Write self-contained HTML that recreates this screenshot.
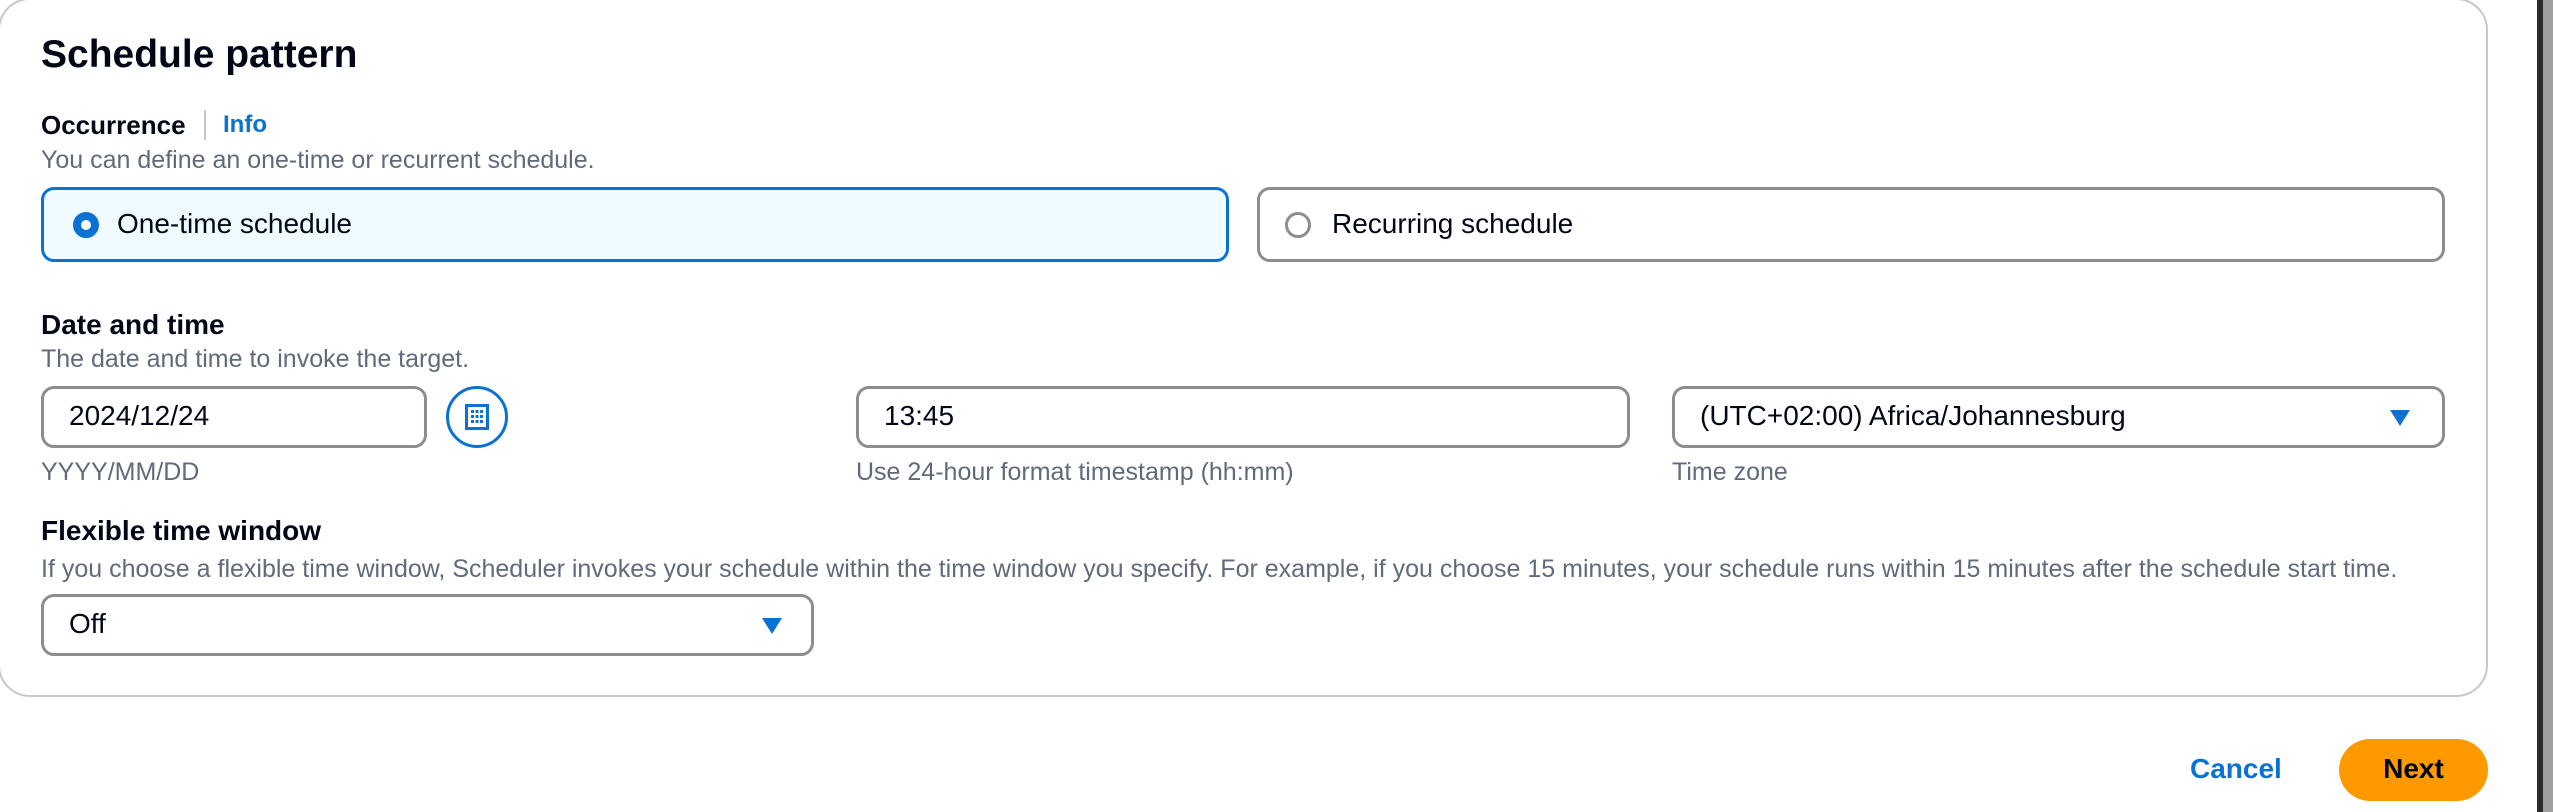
<!DOCTYPE html>
<html><head><meta charset="utf-8"><style>
*{box-sizing:border-box;margin:0;padding:0}
body{width:2553px;height:812px;background:#fff;position:relative;overflow:hidden;font-family:"Liberation Sans",Arial,sans-serif;color:#000716}
.a{position:absolute;white-space:nowrap}
.card{position:absolute;left:-2px;top:-2px;width:2490px;height:699px;border:2px solid #c6c6cd;border-radius:32px}
.h{font-weight:bold}
.d{color:#5f6b7a;font-size:25px}
.hp{color:#5f6b7a;font-size:25px}
.box{position:absolute;border:3px solid #8c8c94;border-radius:13px;background:#fff}
.txt{font-size:28px}
.arr{position:absolute;width:0;height:0;border-left:10px solid transparent;border-right:10px solid transparent;border-top:16px solid #0972d3}
</style></head><body>
<div class="card"></div>
<div class="a h" style="left:41px;top:33px;font-size:39px">Schedule pattern</div>
<div class="a h" style="left:41px;top:110px;font-size:26px">Occurrence</div>
<div class="a" style="left:204px;top:110px;width:2px;height:30px;background:#c6c6cd"></div>
<div class="a h" style="left:223px;top:111px;font-size:24px;color:#0972d3">Info</div>
<div class="a d" style="left:41px;top:146px">You can define an one-time or recurrent schedule.</div>
<div class="box" style="left:41px;top:187px;width:1188px;height:75px;border-color:#0972d3;background:#f0fbff"></div>
<div class="a" style="left:73px;top:212px;width:26px;height:26px;border-radius:50%;border:8px solid #0972d3;background:#fff"></div>
<div class="a txt" style="left:117px;top:208px">One-time schedule</div>
<div class="box" style="left:1257px;top:187px;width:1188px;height:75px"></div>
<div class="a" style="left:1285px;top:212px;width:26px;height:26px;border-radius:50%;border:3px solid #8c8c94"></div>
<div class="a txt" style="left:1332px;top:208px">Recurring schedule</div>
<div class="a h" style="left:41px;top:309px;font-size:28px">Date and time</div>
<div class="a d" style="left:41px;top:345px">The date and time to invoke the target.</div>
<div class="box" style="left:41px;top:386px;width:386px;height:62px"></div>
<div class="a txt" style="left:69px;top:400px">2024/12/24</div>
<div class="a" style="left:446px;top:386px;width:62px;height:62px;border-radius:50%;border:3px solid #0972d3"></div>
<svg class="a" style="left:465px;top:404px" width="24" height="26" viewBox="0 0 24 26"><rect x="1.5" y="1.5" width="21" height="23" fill="none" stroke="#0972d3" stroke-width="3"/><g fill="#0972d3"><rect x="6" y="6" width="3" height="3"/><rect x="10.5" y="6" width="3" height="3"/><rect x="15" y="6" width="3" height="3"/><rect x="6" y="11" width="3" height="3"/><rect x="10.5" y="11" width="3" height="3"/><rect x="15" y="11" width="3" height="3"/><rect x="6" y="16" width="3" height="3"/><rect x="10.5" y="16" width="3" height="3"/><rect x="15" y="16" width="3" height="3"/></g></svg>
<div class="box" style="left:856px;top:386px;width:774px;height:62px"></div>
<div class="a txt" style="left:884px;top:400px">13:45</div>
<div class="box" style="left:1672px;top:386px;width:773px;height:62px"></div>
<div class="a txt" style="left:1700px;top:400px">(UTC+02:00) Africa/Johannesburg</div>
<div class="arr" style="left:2390px;top:410px"></div>
<div class="a hp" style="left:41px;top:458px">YYYY/MM/DD</div>
<div class="a hp" style="left:856px;top:458px">Use 24-hour format timestamp (hh:mm)</div>
<div class="a hp" style="left:1672px;top:458px">Time zone</div>
<div class="a h" style="left:41px;top:515px;font-size:28px">Flexible time window</div>
<div class="a d" style="left:41px;top:555px">If you choose a flexible time window, Scheduler invokes your schedule within the time window you specify. For example, if you choose 15 minutes, your schedule runs within 15 minutes after the schedule start time.</div>
<div class="box" style="left:41px;top:594px;width:773px;height:62px"></div>
<div class="a txt" style="left:69px;top:608px">Off</div>
<div class="arr" style="left:762px;top:618px"></div>
<div class="a h" style="left:2190px;top:753px;font-size:28px;color:#0972d3">Cancel</div>
<div class="a" style="left:2339px;top:739px;width:149px;height:62px;border-radius:31px;background:#ff9900"></div>
<div class="a h" style="left:2339px;top:753px;width:149px;text-align:center;font-size:28px">Next</div>
<div class="a" style="left:2537px;top:0;width:6px;height:812px;background:#2b2b2b"></div>
<div class="a" style="left:2543px;top:0;width:10px;height:812px;background:#a0a0a0"></div>
</body></html>
